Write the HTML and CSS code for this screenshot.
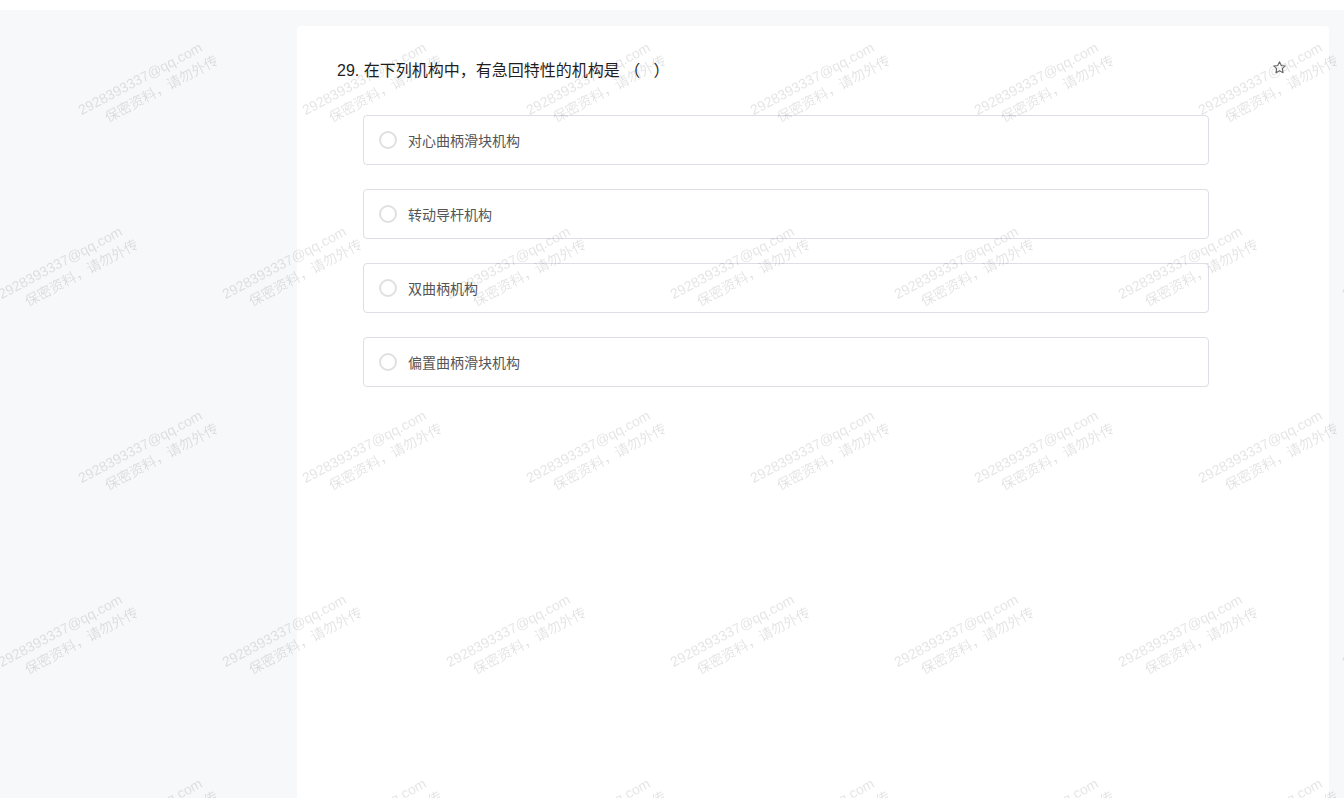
FILE: index.html
```html
<!DOCTYPE html>
<html lang="zh-CN">
<head>
<meta charset="utf-8">
<title>Question</title>
<link rel="stylesheet" href="styles.css">
</head>
<body>
<div class="topbar"></div>
<div class="page">
  <div class="card">
    <div class="q-head">
      <div class="q-title">29. 在下列机构中，有急回特性的机构是 （&nbsp;&nbsp;&nbsp;）</div>
      <svg class="star" width="15" height="15" viewBox="0 0 24 24" fill="none" stroke="#6b6b6b" stroke-width="1.8" stroke-linejoin="round"><path d="M12 2.8l2.8 5.9 6.4.8-4.7 4.4 1.2 6.4L12 17.2l-5.7 3.1 1.2-6.4-4.7-4.4 6.4-.8z"/></svg>
    </div>
    <div class="options">
      <div class="option"><span class="radio"></span><span class="opt-text">对心曲柄滑块机构</span></div>
      <div class="option"><span class="radio"></span><span class="opt-text">转动导杆机构</span></div>
      <div class="option"><span class="radio"></span><span class="opt-text">双曲柄机构</span></div>
      <div class="option"><span class="radio"></span><span class="opt-text">偏置曲柄滑块机构</span></div>
    </div>
  </div>
</div>
<div class="wm-layer">
  <div class="wm-row odd">
    <div class="wm"><div class="wm-inner"><div>2928393337@qq.com</div><div class="l2">保密资料，请勿外传</div></div></div>
    <div class="wm"><div class="wm-inner"><div>2928393337@qq.com</div><div class="l2">保密资料，请勿外传</div></div></div>
    <div class="wm"><div class="wm-inner"><div>2928393337@qq.com</div><div class="l2">保密资料，请勿外传</div></div></div>
    <div class="wm"><div class="wm-inner"><div>2928393337@qq.com</div><div class="l2">保密资料，请勿外传</div></div></div>
    <div class="wm"><div class="wm-inner"><div>2928393337@qq.com</div><div class="l2">保密资料，请勿外传</div></div></div>
    <div class="wm"><div class="wm-inner"><div>2928393337@qq.com</div><div class="l2">保密资料，请勿外传</div></div></div>
    <div class="wm"><div class="wm-inner"><div>2928393337@qq.com</div><div class="l2">保密资料，请勿外传</div></div></div>
  </div>
  <div class="wm-row even">
    <div class="wm"><div class="wm-inner"><div>2928393337@qq.com</div><div class="l2">保密资料，请勿外传</div></div></div>
    <div class="wm"><div class="wm-inner"><div>2928393337@qq.com</div><div class="l2">保密资料，请勿外传</div></div></div>
    <div class="wm"><div class="wm-inner"><div>2928393337@qq.com</div><div class="l2">保密资料，请勿外传</div></div></div>
    <div class="wm"><div class="wm-inner"><div>2928393337@qq.com</div><div class="l2">保密资料，请勿外传</div></div></div>
    <div class="wm"><div class="wm-inner"><div>2928393337@qq.com</div><div class="l2">保密资料，请勿外传</div></div></div>
    <div class="wm"><div class="wm-inner"><div>2928393337@qq.com</div><div class="l2">保密资料，请勿外传</div></div></div>
    <div class="wm"><div class="wm-inner"><div>2928393337@qq.com</div><div class="l2">保密资料，请勿外传</div></div></div>
  </div>
  <div class="wm-row odd">
    <div class="wm"><div class="wm-inner"><div>2928393337@qq.com</div><div class="l2">保密资料，请勿外传</div></div></div>
    <div class="wm"><div class="wm-inner"><div>2928393337@qq.com</div><div class="l2">保密资料，请勿外传</div></div></div>
    <div class="wm"><div class="wm-inner"><div>2928393337@qq.com</div><div class="l2">保密资料，请勿外传</div></div></div>
    <div class="wm"><div class="wm-inner"><div>2928393337@qq.com</div><div class="l2">保密资料，请勿外传</div></div></div>
    <div class="wm"><div class="wm-inner"><div>2928393337@qq.com</div><div class="l2">保密资料，请勿外传</div></div></div>
    <div class="wm"><div class="wm-inner"><div>2928393337@qq.com</div><div class="l2">保密资料，请勿外传</div></div></div>
    <div class="wm"><div class="wm-inner"><div>2928393337@qq.com</div><div class="l2">保密资料，请勿外传</div></div></div>
  </div>
  <div class="wm-row even">
    <div class="wm"><div class="wm-inner"><div>2928393337@qq.com</div><div class="l2">保密资料，请勿外传</div></div></div>
    <div class="wm"><div class="wm-inner"><div>2928393337@qq.com</div><div class="l2">保密资料，请勿外传</div></div></div>
    <div class="wm"><div class="wm-inner"><div>2928393337@qq.com</div><div class="l2">保密资料，请勿外传</div></div></div>
    <div class="wm"><div class="wm-inner"><div>2928393337@qq.com</div><div class="l2">保密资料，请勿外传</div></div></div>
    <div class="wm"><div class="wm-inner"><div>2928393337@qq.com</div><div class="l2">保密资料，请勿外传</div></div></div>
    <div class="wm"><div class="wm-inner"><div>2928393337@qq.com</div><div class="l2">保密资料，请勿外传</div></div></div>
    <div class="wm"><div class="wm-inner"><div>2928393337@qq.com</div><div class="l2">保密资料，请勿外传</div></div></div>
  </div>
  <div class="wm-row odd">
    <div class="wm"><div class="wm-inner"><div>2928393337@qq.com</div><div class="l2">保密资料，请勿外传</div></div></div>
    <div class="wm"><div class="wm-inner"><div>2928393337@qq.com</div><div class="l2">保密资料，请勿外传</div></div></div>
    <div class="wm"><div class="wm-inner"><div>2928393337@qq.com</div><div class="l2">保密资料，请勿外传</div></div></div>
    <div class="wm"><div class="wm-inner"><div>2928393337@qq.com</div><div class="l2">保密资料，请勿外传</div></div></div>
    <div class="wm"><div class="wm-inner"><div>2928393337@qq.com</div><div class="l2">保密资料，请勿外传</div></div></div>
    <div class="wm"><div class="wm-inner"><div>2928393337@qq.com</div><div class="l2">保密资料，请勿外传</div></div></div>
    <div class="wm"><div class="wm-inner"><div>2928393337@qq.com</div><div class="l2">保密资料，请勿外传</div></div></div>
  </div>
</div>
</body>
</html>
```
FILE: styles.css
```css
html, body {
  margin: 0;
  padding: 0;
  height: 100%;
}
body {
  background: #f7f8fa;
  font-family: "Liberation Sans", "Noto Sans CJK SC", sans-serif;
  overflow: hidden;
}
.topbar {
  height: 10px;
  background: #ffffff;
}
.page {
  padding: 16px 15px 0 297px;
}
.card {
  background: #ffffff;
  border-radius: 4px 4px 0 0;
  min-height: 790px;
  padding: 33px 42px 0 40px;
  box-sizing: border-box;
}
.q-head {
  display: flex;
  justify-content: space-between;
  align-items: flex-start;
}
.q-title {
  font-size: 16px;
  line-height: 24px;
  color: #1f1f1f;
}
.star {
  margin-top: 1px;
  display: block;
}
.options {
  margin: 32px 0 0 26px;
  width: 846px;
  display: flex;
  flex-direction: column;
  gap: 24px;
}
.option {
  height: 50px;
  box-sizing: border-box;
  border: 1px solid #dcdfe6;
  border-radius: 4px;
  display: flex;
  align-items: center;
  padding-left: 15px;
}
.radio {
  width: 18px;
  height: 18px;
  box-sizing: border-box;
  border: 2px solid #e0e0e0;
  border-radius: 50%;
  flex: none;
}
.opt-text {
  margin-left: 11px;
  margin-bottom: 1px;
  font-size: 14px;
  color: #555555;
}
.wm-layer {
  position: fixed;
  left: 0;
  top: 0;
  right: 0;
  bottom: 0;
  overflow: hidden;
  pointer-events: none;
  padding-top: 103px;
  display: flex;
  flex-direction: column;
}
.wm-row {
  display: flex;
  flex: none;
  height: 184px;
}
.wm-row.odd {
  margin-left: 75px;
}
.wm-row.even {
  margin-left: -5px;
}
.wm {
  width: 224px;
  flex: none;
  height: 0;
}
.wm-inner {
  transform: rotate(-28deg);
  transform-origin: 0 0;
  font-family: "Liberation Sans", "Noto Sans CJK SC", sans-serif;
  font-size: 14px;
  line-height: 19px;
  white-space: nowrap;
  color: rgba(0, 0, 0, 0.11);
}
.wm-inner .l2 {
  padding-left: 20px;
}
```
